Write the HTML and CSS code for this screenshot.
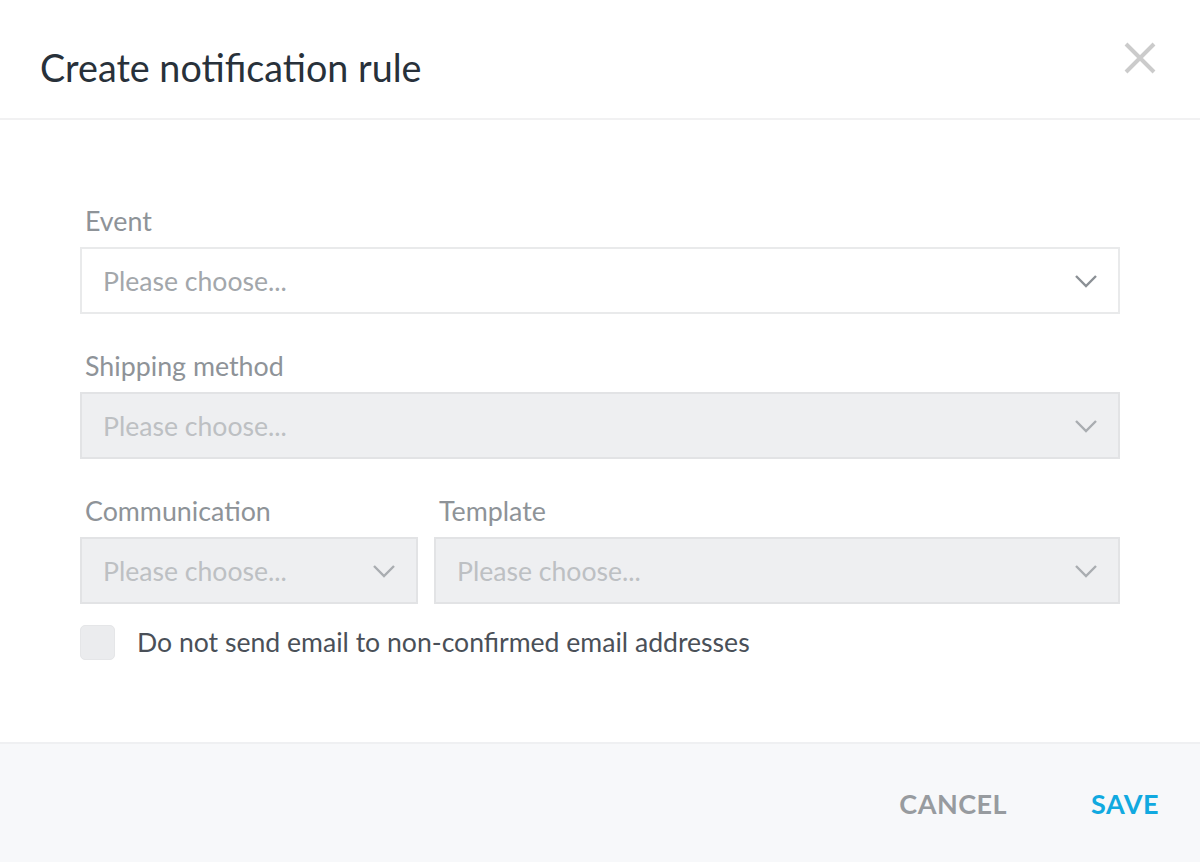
FILE: index.html
```html
<!DOCTYPE html>
<html lang="en">
<head>
    <meta charset="utf-8">
    <title>Create notification rule</title>
    <link rel="stylesheet" href="styles.css">
</head>
<body>

<div class="dialog">
    <div class="dialog-header">
        <h2 class="dialog-title">Create notification rule</h2>
        <button class="dialog-close" type="button" aria-label="Close">
            <svg width="32" height="32" viewBox="0 0 32 32">
                <path d="M2 2 L30 30 M30 2 L2 30" stroke="#cbcbcb" stroke-width="4" fill="none"/>
            </svg>
        </button>
    </div>

    <div class="dialog-body">
        <div class="field">
            <label class="field-label">Event</label>
            <div class="select">
                <span class="select-value">Please choose...</span>
                <svg class="select-arrow" width="24" height="14" viewBox="0 0 24 14">
                    <path d="M2 2 L12 12 L22 2" stroke="#8b9095" stroke-width="2.4" fill="none"/>
                </svg>
            </div>
        </div>

        <div class="field">
            <label class="field-label">Shipping method</label>
            <div class="select disabled">
                <span class="select-value">Please choose...</span>
                <svg class="select-arrow" width="24" height="14" viewBox="0 0 24 14">
                    <path d="M2 2 L12 12 L22 2" stroke="#a9adb1" stroke-width="2.4" fill="none"/>
                </svg>
            </div>
        </div>

        <div class="field-row">
            <div class="field">
                <label class="field-label">Communication</label>
                <div class="select disabled">
                    <span class="select-value">Please choose...</span>
                    <svg class="select-arrow" width="24" height="14" viewBox="0 0 24 14">
                        <path d="M2 2 L12 12 L22 2" stroke="#a9adb1" stroke-width="2.4" fill="none"/>
                    </svg>
                </div>
            </div>
            <div class="field">
                <label class="field-label">Template</label>
                <div class="select disabled">
                    <span class="select-value">Please choose...</span>
                    <svg class="select-arrow" width="24" height="14" viewBox="0 0 24 14">
                        <path d="M2 2 L12 12 L22 2" stroke="#a9adb1" stroke-width="2.4" fill="none"/>
                    </svg>
                </div>
            </div>
        </div>

        <label class="checkbox">
            <span class="checkbox-box"></span>
            <span class="checkbox-text">Do not send email to non-confirmed email addresses</span>
        </label>
    </div>

    <div class="dialog-footer">
        <button class="btn btn-cancel" type="button">Cancel</button>
        <button class="btn btn-save" type="button">Save</button>
    </div>
</div>

</body>
</html>
```

FILE: styles.css
```css
*
{
    margin: 0;
    padding: 0;
    box-sizing: border-box;
}
body
{
    font-family: Lato, "Liberation Sans", sans-serif;
    background: #fff;
}

.dialog
{
    width: 1200px;
    height: 862px;
    display: flex;
    flex-direction: column;
}

/* header */
.dialog-header
{
    height: 120px;
    border-bottom: 2px solid #f1f1f2;
    display: flex;
    justify-content: space-between;
    align-items: flex-start;
    padding: 44px 44px 0 40px;
}
.dialog-title
{
    font-size: 37.7px;
    font-weight: 400;
    line-height: 48px;
    color: #28313a;
}
.dialog-close
{
    border: none;
    background: none;
    width: 32px;
    height: 32px;
    margin-top: -2px;
}
.dialog-close svg
{
    display: block;
}

/* form */
.dialog-body
{
    flex: 1;
    padding: 83px 80px 0 80px;
}
.field
{
    margin-bottom: 34px;
}
.field-label
{
    display: block;
    font-size: 26.8px;
    line-height: 36px;
    color: #8e9398;
    padding-left: 5px;
    margin-bottom: 8px;
}
.field-row
{
    display: grid;
    grid-template-columns: 338px 1fr;
    column-gap: 16px;
    margin-top: 1px;
}
.field-row .field
{
    margin-bottom: 21px;
}

.select
{
    height: 67px;
    border: 2px solid #e9eaeb;
    background: #fff;
    display: flex;
    align-items: center;
    justify-content: space-between;
    padding: 0 20px 0 21px;
}
.select.disabled
{
    background: #eeeff1;
    border-color: #e2e3e5;
}
.select-value
{
    font-size: 26.6px;
    color: #a3a7ab;
}
.select.disabled .select-value
{
    color: #bdc0c3;
}
.select-arrow
{
    display: block;
}

/* checkbox */
.checkbox
{
    display: flex;
    align-items: center;
}
.checkbox-box
{
    width: 35px;
    height: 35px;
    border-radius: 5px;
    background: #ebecee;
    border: 1px solid #e5e6e8;
    margin-right: 22px;
}
.checkbox-text
{
    font-size: 26.6px;
    line-height: 35px;
    color: #4a5058;
}

/* footer */
.dialog-footer
{
    height: 120px;
    background: #f7f8fa;
    border-top: 2px solid #eff0f2;
    display: flex;
    justify-content: flex-end;
    align-items: center;
    gap: 84px;
    padding: 0 41px 0 0;
}
.btn
{
    border: none;
    background: none;
    font-family: Lato, "Liberation Sans", sans-serif;
    font-size: 27px;
    font-weight: 700;
    text-transform: uppercase;
    letter-spacing: 0.5px;
}
.btn-cancel
{
    color: #979b9f;
}
.btn-save
{
    color: #11a9e0;
}
```
